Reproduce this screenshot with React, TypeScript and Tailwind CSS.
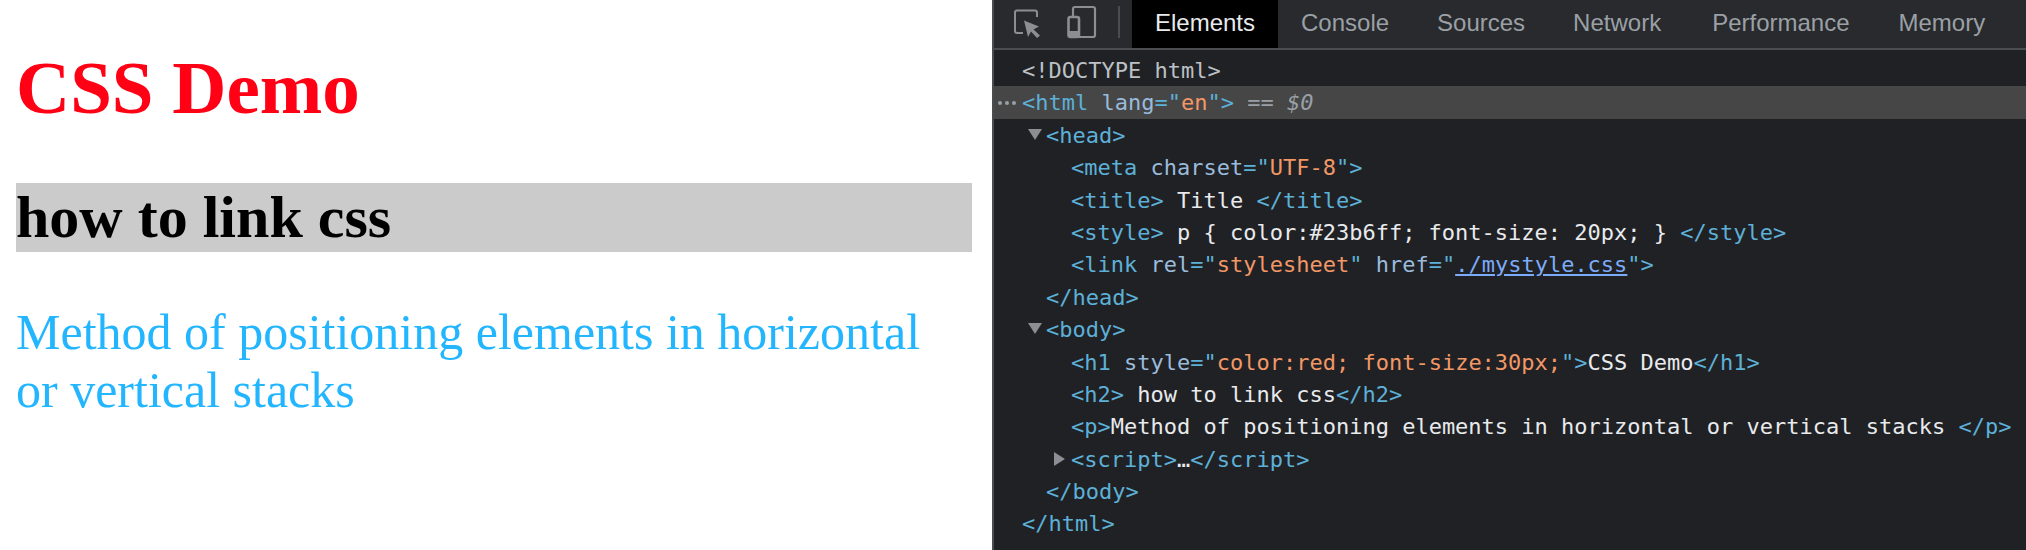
const SERIF = "font-['Liberation_Serif',serif]"

const TABS = [
  { label: 'Console', cls: '-ml-px' },
  { label: 'Sources', cls: '' },
  { label: 'Network', cls: '' },
  { label: 'Performance', cls: 'ml-[3px]' },
  { label: 'Memory', cls: 'ml-px' },
]

function Tag({ children }: { children: React.ReactNode }) {
  return <span className="text-[#5db0d7]">{children}</span>
}
function Attr({ children }: { children: React.ReactNode }) {
  return <span className="text-[#9bbbdc]">{children}</span>
}
function Val({ children }: { children: React.ReactNode }) {
  return <span className="text-[#f29766]">{children}</span>
}
function Txt({ children }: { children: React.ReactNode }) {
  return <span className="text-[#e8eaed]">{children}</span>
}

function Row({ indent, arrow, children }: { indent: string; arrow?: 'down' | 'right'; children: React.ReactNode }) {
  return (
    <div className={`relative h-[32.4px] leading-[34px] whitespace-pre ${indent}`}>
      {arrow === 'down' && (
        <span className="absolute -ml-[18px] mt-[10px] w-0 h-0 border-l-[7px] border-r-[7px] border-t-[11px] border-l-transparent border-r-transparent border-t-[#8b8e93]" />
      )}
      {arrow === 'right' && (
        <span className="absolute -ml-[17px] mt-[9px] w-0 h-0 border-t-[7px] border-b-[7px] border-l-[11px] border-t-transparent border-b-transparent border-l-[#8b8e93]" />
      )}
      {children}
    </div>
  )
}

export default function App() {
  return (
    <div className="flex w-[2026px] h-[550px] overflow-hidden bg-white">
      {/* page */}
      <div className={`w-[992px] shrink-0 pl-4 pr-5 pt-[45px] ${SERIF}`}>
        <h1 className="text-[75px] leading-[86px] font-bold text-[#ff0015]">CSS Demo</h1>
        <h2 className="mt-[52px] h-[69px] text-[60px] leading-[69px] font-bold text-black bg-[#cbcbcb]">how to link css</h2>
        <p className="mt-[51px] text-[50px] leading-[58px] text-[#23b6ff]">Method of positioning elements in horizontal or vertical stacks</p>
      </div>

      {/* devtools */}
      <div className="flex-1 border-l-2 border-[#4a4c50] bg-[#202124]">
        <div className="flex items-stretch h-[50px] bg-[#292a2d] border-b-2 border-[#494c50] font-['Liberation_Sans',sans-serif] text-[24px]">
          <div className="w-[138px] flex items-start">
            <svg width="138" height="48" viewBox="0 0 138 48" fill="none">
              <path d="M29 33H23a2 2 0 0 1-2-2V12.5a2 2 0 0 1 2-2H41a2 2 0 0 1 2 2V17" stroke="#8b8e93" strokeWidth="2" />
              <path d="M30 20.5L45 26.5L39.5 29.5L46 35.5L43 38L37 31.5L34 37Z" fill="#8b8e93" />
              <path d="M79 16V9a2 2 0 0 1 2-2H99a2 2 0 0 1 2 2V35a2 2 0 0 1-2 2H84" stroke="#8b8e93" strokeWidth="2.2" />
              <rect x="74.5" y="17" width="10.5" height="20" rx="2" stroke="#8b8e93" strokeWidth="2.6" />
              <rect x="75" y="31" width="10" height="5" fill="#8b8e93" />
              <rect x="124" y="6" width="2" height="32" fill="#4a4c50" />
            </svg>
          </div>
          <div className="flex items-center justify-center w-[146px] pb-[2px] bg-black text-[#e8eaed]">Elements</div>
          {TABS.map(t => (
            <div key={t.label} className={`flex items-center px-6 pb-[2px] text-[#9aa0a6] ${t.cls}`}>{t.label}</div>
          ))}
        </div>

        <div className="pt-[4px] font-['DejaVu_Sans_Mono',monospace] text-[22px] text-[#e8eaed]">
          <Row indent="pl-[28px]"><span className="text-[#bdc1c6]">{'<!DOCTYPE html>'}</span></Row>
          <div className="relative bg-[#464646]">
            <div className="absolute left-[4px] top-[15px] flex gap-[3px]">
              <span className="w-[4px] h-[4px] rounded-full bg-[#9aa0a6]" />
              <span className="w-[4px] h-[4px] rounded-full bg-[#9aa0a6]" />
              <span className="w-[4px] h-[4px] rounded-full bg-[#9aa0a6]" />
            </div>
            <Row indent="pl-[28px]">
              <Tag>{'<html '}</Tag><Attr>lang</Attr><Tag>=&quot;</Tag><Val>en</Val><Tag>&quot;&gt;</Tag>
              <span className="text-[#9aa0a6]"> == <i>$0</i></span>
            </Row>
          </div>
          <Row indent="pl-[52px]" arrow="down"><Tag>{'<head>'}</Tag></Row>
          <Row indent="pl-[77px]"><Tag>{'<meta '}</Tag><Attr>charset</Attr><Tag>=&quot;</Tag><Val>UTF-8</Val><Tag>&quot;&gt;</Tag></Row>
          <Row indent="pl-[77px]"><Tag>{'<title>'}</Tag><Txt> Title </Txt><Tag>{'</title>'}</Tag></Row>
          <Row indent="pl-[77px]"><Tag>{'<style>'}</Tag><Txt>{' p { color:#23b6ff; font-size: 20px; } '}</Txt><Tag>{'</style>'}</Tag></Row>
          <Row indent="pl-[77px]">
            <Tag>{'<link '}</Tag><Attr>rel</Attr><Tag>=&quot;</Tag><Val>stylesheet</Val><Tag>&quot; </Tag>
            <Attr>href</Attr><Tag>=&quot;</Tag><span className="text-[#7cacf8] underline">./mystyle.css</span><Tag>&quot;&gt;</Tag>
          </Row>
          <Row indent="pl-[52px]"><Tag>{'</head>'}</Tag></Row>
          <Row indent="pl-[52px]" arrow="down"><Tag>{'<body>'}</Tag></Row>
          <Row indent="pl-[77px]">
            <Tag>{'<h1 '}</Tag><Attr>style</Attr><Tag>=&quot;</Tag><Val>color:red; font-size:30px;</Val><Tag>&quot;&gt;</Tag>
            <Txt>CSS Demo</Txt><Tag>{'</h1>'}</Tag>
          </Row>
          <Row indent="pl-[77px]"><Tag>{'<h2>'}</Tag><Txt> how to link css</Txt><Tag>{'</h2>'}</Tag></Row>
          <Row indent="pl-[77px]"><Tag>{'<p>'}</Tag><Txt>Method of positioning elements in horizontal or vertical stacks </Txt><Tag>{'</p>'}</Tag></Row>
          <Row indent="pl-[77px]" arrow="right"><Tag>{'<script>'}</Tag><Txt>…</Txt><Tag>{'</script>'}</Tag></Row>
          <Row indent="pl-[52px]"><Tag>{'</body>'}</Tag></Row>
          <Row indent="pl-[28px]"><Tag>{'</html>'}</Tag></Row>
        </div>
      </div>
    </div>
  )
}
